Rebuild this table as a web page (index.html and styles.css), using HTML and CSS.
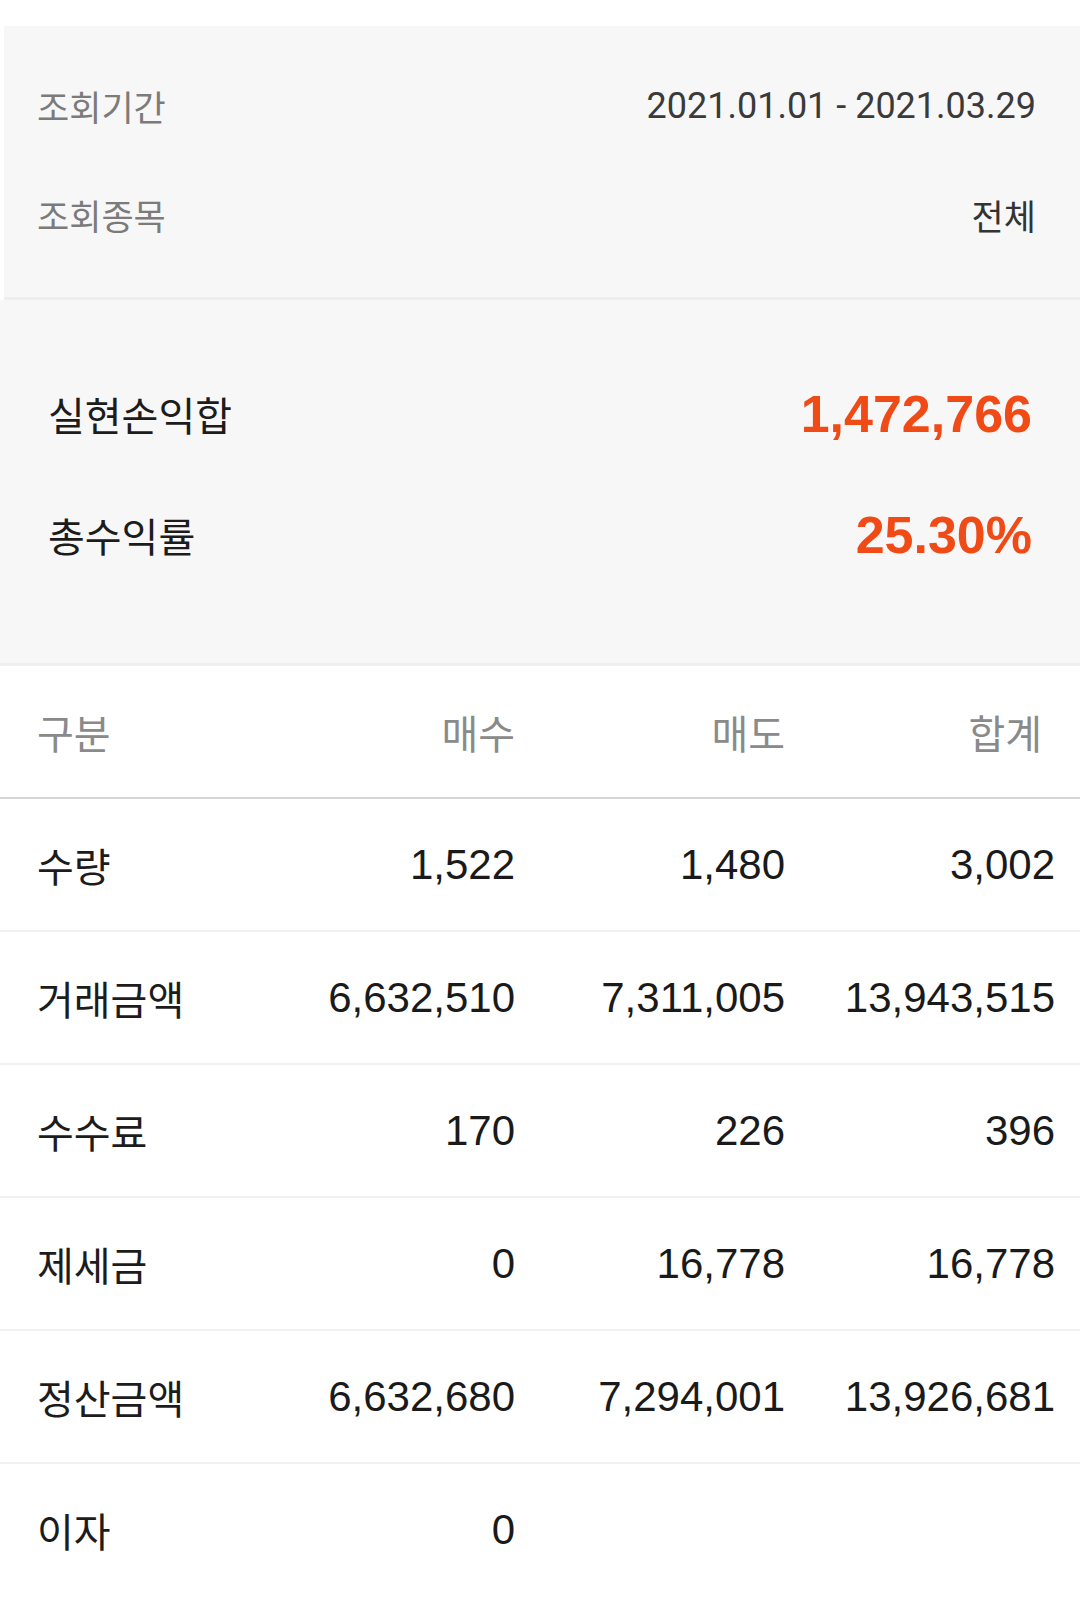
FILE: index.html
```html
<!DOCTYPE html>
<html lang="ko">
<head>
    <meta charset="UTF-8">
    <meta name="viewport" content="width=device-width, initial-scale=1.0">
    <title>실현손익 조회</title>
    <link rel="stylesheet" href="styles.css">
</head>
<body>
    <div class="query-box">
        <div class="query-row">
            <span class="query-label">조회기간</span>
            <span class="query-value query-date">2021.01.01 - 2021.03.29</span>
        </div>
        <div class="query-row">
            <span class="query-label">조회종목</span>
            <span class="query-value">전체</span>
        </div>
    </div>

    <div class="summary-box">
        <div class="summary-row">
            <span class="summary-label">실현손익합</span>
            <span class="summary-value">1,472,766</span>
        </div>
        <div class="summary-row">
            <span class="summary-label">총수익률</span>
            <span class="summary-value">25.30%</span>
        </div>
    </div>

    <div class="trade-table">
        <div class="table-row table-head">
            <div class="cell-label">구분</div>
            <div class="cell">매수</div>
            <div class="cell">매도</div>
            <div class="cell cell-last">합계</div>
        </div>
        <div class="table-row">
            <div class="cell-label">수량</div>
            <div class="cell">1,522</div>
            <div class="cell">1,480</div>
            <div class="cell">3,002</div>
        </div>
        <div class="table-row">
            <div class="cell-label">거래금액</div>
            <div class="cell">6,632,510</div>
            <div class="cell">7,311,005</div>
            <div class="cell">13,943,515</div>
        </div>
        <div class="table-row">
            <div class="cell-label">수수료</div>
            <div class="cell">170</div>
            <div class="cell">226</div>
            <div class="cell">396</div>
        </div>
        <div class="table-row">
            <div class="cell-label">제세금</div>
            <div class="cell">0</div>
            <div class="cell">16,778</div>
            <div class="cell">16,778</div>
        </div>
        <div class="table-row">
            <div class="cell-label">정산금액</div>
            <div class="cell">6,632,680</div>
            <div class="cell">7,294,001</div>
            <div class="cell">13,926,681</div>
        </div>
        <div class="table-row table-last">
            <div class="cell-label">이자</div>
            <div class="cell">0</div>
            <div class="cell"></div>
            <div class="cell"></div>
        </div>
    </div>
</body>
</html>
```

FILE: styles.css
```css
body {
    font-family: "Liberation Sans", "Noto Sans CJK KR", sans-serif;
    margin: 0;
    padding: 0;
    background: #ffffff;
    color: #1a1a1a;
    width: 1080px;
}

/* 조회 조건 */
.query-box {
    margin: 26px 0 0 4px;
    padding: 25px 44px 28px 33px;
    background: #f7f7f7;
    border-bottom: 3px solid #eeeeee;
}
.query-row {
    display: flex;
    justify-content: space-between;
    align-items: center;
    height: 109px;
}
.query-label {
    font-family: "Noto Sans CJK KR", sans-serif;
    font-size: 35px;
    line-height: 42px;
    color: #7b7b7b;
}
.query-value {
    font-family: "Noto Sans CJK KR", sans-serif;
    font-size: 35px;
    line-height: 42px;
    color: #333333;
}
.query-date {
    font-family: Roboto, sans-serif;
    font-size: 36px;
    color: #3a3a3a;
}

/* 손익 요약 */
.summary-box {
    padding: 53px 48px 68px 48px;
    background: #f7f7f7;
    border-bottom: 3px solid #efefef;
}
.summary-row {
    display: flex;
    justify-content: space-between;
    align-items: center;
    height: 121px;
}
.summary-label {
    font-family: "Noto Sans CJK KR", sans-serif;
    font-size: 40px;
    line-height: 46px;
    color: #1c1c1c;
}
.summary-value {
    font-size: 52px;
    font-weight: bold;
    line-height: 58px;
    color: #f04b16;
}

/* 매매 내역 표 */
.table-row {
    display: grid;
    grid-template-columns: 1fr repeat(3, 270px);
    align-items: center;
    height: 131px;
    padding: 0 25px 0 37px;
    border-bottom: 2px solid #f1f1f1;
}
.table-head {
    border-bottom-color: #d6d6d6;
}
.table-last {
    border-bottom: none;
}
.cell-label {
    font-family: "Noto Sans CJK KR", sans-serif;
    font-size: 40px;
    line-height: 46px;
    color: #1c1c1c;
}
.cell {
    font-size: 42px;
    line-height: 48px;
    text-align: right;
    color: #1a1a1a;
}
.table-head .cell-label,
.table-head .cell {
    font-family: "Noto Sans CJK KR", sans-serif;
    font-size: 40px;
    color: #8a8a8a;
}
.table-head .cell-last {
    padding-right: 13px;
}
```
